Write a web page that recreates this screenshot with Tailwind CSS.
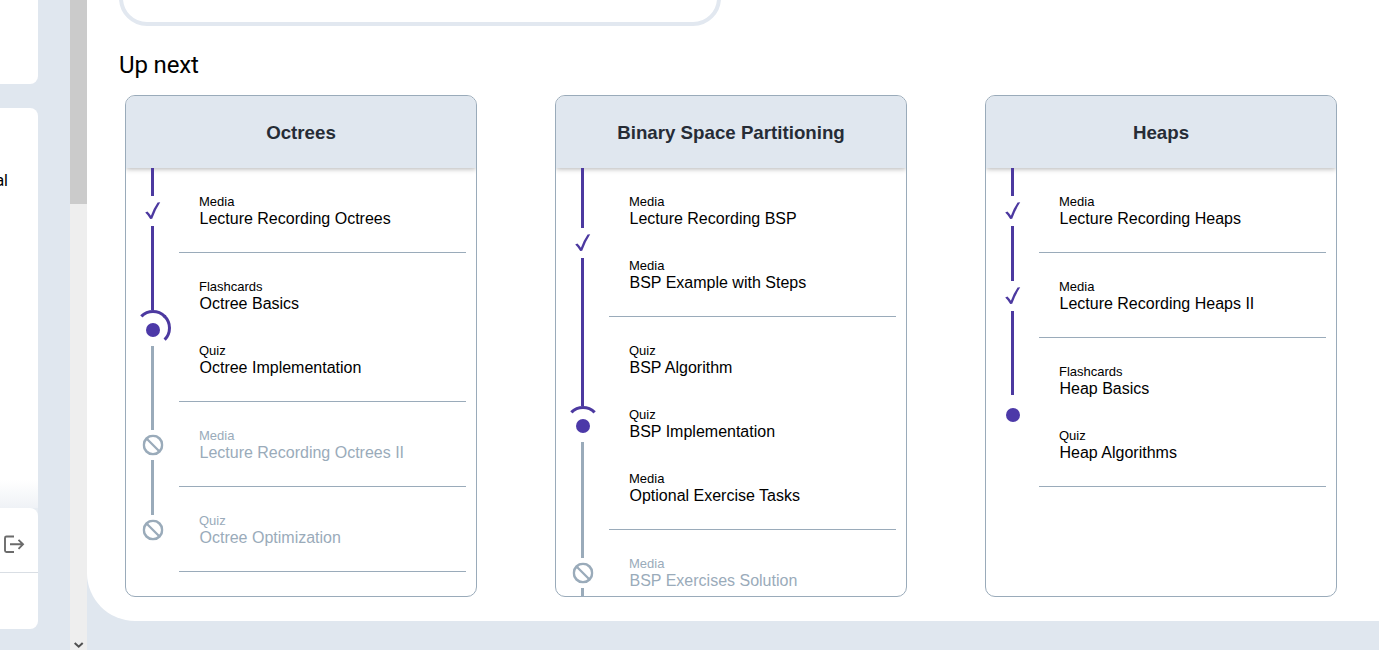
<!DOCTYPE html>
<html lang="en">
<head>
<meta charset="utf-8">
<title>Up next</title>
<script src="https://cdn.jsdelivr.net/npm/@tailwindcss/browser@4"></script>
</head>
<body class="flex h-[650px] w-[1379px] overflow-hidden bg-[#e0e7ef] text-black font-['Liberation_Sans',Arial,sans-serif]">
<svg class="hidden">
  <symbol id="check" viewBox="0 0 16 18"><path d="M.2 10.600 2.400 9.600Q4.400 11.400 5.900 13.700 8.600 6.400 12.600 .6L15.200 .3Q10.300 8 7.200 16.800L5.200 16.900Q3 13.200 .2 10.600Z" fill="currentColor"/></symbol>
  <symbol id="ban" viewBox="0 0 21 21"><circle cx="10.500" cy="10.500" r="9.200" fill="none" stroke="currentColor" stroke-width="2.500"/><path d="M4 4 17 17" stroke="currentColor" stroke-width="2.300"/></symbol>
</svg>

<aside class="flex w-[70px] shrink-0 flex-col">
  <div class="h-[84px] w-[38px] rounded-br-lg bg-white"></div>
  <div class="mt-6 flex h-[521px] w-[38px] flex-col overflow-hidden rounded-r-lg bg-white">
    <div class="flex h-[400px] flex-col justify-between">
      <div class="mt-[61px] flex w-2 justify-end text-[16px] leading-[24px] font-['Roboto',sans-serif]">al</div>
      <div class="h-7 bg-linear-to-b from-white to-[#eff2f6]"></div>
    </div>
    <div class="bg-[#e8edf3]">
      <div class="flex h-[65px] items-center rounded-tr-lg border-b border-[#d9dee4] bg-white pt-[9px] pl-[3px]">
        <svg class="h-[20px] w-[22px] text-[#6b6b6b]" viewBox="0 0 22 20" fill="none" stroke="currentColor" stroke-width="1.900"><path d="M11 1.500H3.500Q2 1.500 2 3V15.500Q2 17 3.500 17H11M7 9.300H20M15.500 4.800 20 9.300 15.500 13.800"/></svg>
      </div>
    </div>
  </div>
</aside>

<div class="flex w-[17px] shrink-0 flex-col justify-between bg-[#eeeeee]">
  <div class="h-[204px] bg-[#cbcbcb]"></div>
  <svg class="ml-1 h-[9px] w-[10px]" viewBox="0 0 10 9" fill="none" stroke="#505050" stroke-width="2"><path d="M.700 1.900 4.700 5.700 8.700 1.900"/></svg>
</div>

<main class="h-[621px] flex-1 overflow-hidden rounded-bl-[48px] bg-white pl-8">
  <div class="-mt-[75px] h-[101px] w-[602px] rounded-[28px] border-4 border-[#e2e8f0]"></div>
  <h2 class="mt-[23px] text-[24px] leading-8 tracking-[-0.15px] font-['Roboto',sans-serif]">Up next</h2>
  <div class="mt-3.5 ml-1.5 flex gap-[78px]" id="cards"></div>
</main>

<script>
const data = [
  ["Octrees", false, [
    ["check", [["Media", "Lecture Recording Octrees"]]],
    ["half", [["Flashcards", "Octree Basics"], ["Quiz", "Octree Implementation"]]],
    ["ban", [["Media", "Lecture Recording Octrees II"]]],
    ["ban", [["Quiz", "Octree Optimization"]]]]],
  ["Binary Space Partitioning", true, [
    ["check", [["Media", "Lecture Recording BSP"], ["Media", "BSP Example with Steps"]]],
    ["third", [["Quiz", "BSP Algorithm"], ["Quiz", "BSP Implementation"], ["Media", "Optional Exercise Tasks"]]],
    ["ban", [["Media", "BSP Exercises Solution"]]]]],
  ["Heaps", false, [
    ["check", [["Media", "Lecture Recording Heaps"]]],
    ["check", [["Media", "Lecture Recording Heaps II"]]],
    ["dot", [["Flashcards", "Heap Basics"], ["Quiz", "Heap Algorithms"]]]]]
];
const dot = '<span class="mt-[5px] block size-3.5 rounded-full bg-[#4c39a8]"></span>';
const ring = "flex size-9 shrink-0 items-center justify-center rounded-full border-[3px] border-transparent ";
const nodes = {
  check: '<div class="flex h-[30px] shrink-0 items-center text-[#4c39a0]"><svg class="h-[18px] w-4"><use href="#check"/></svg></div>',
  ban: '<div class="flex h-[30px] shrink-0 items-center text-[#9aabba]"><svg class="size-[22px]" viewBox="-0.5 -0.5 22 22"><use href="#ban" width="21" height="21"/></svg></div>',
  half: `<div class="${ring} border-t-[#4c39a0] border-r-[#4c39a0]">${dot}</div>`,
  third: `<div class="${ring} border-t-[#4c39a0]">${dot}</div>`,
  dot: `<div class="${ring}">${dot}</div>`
};
const rail = c => `<span class="w-[3px] flex-1 ${c}"></span>`;
document.getElementById("cards").innerHTML = data.map(([title, continues, sections]) => `
<article class="flex h-[502px] w-[352px] shrink-0 flex-col overflow-hidden rounded-[10px] border border-[#9aabba]">
  <h3 class="flex h-[72px] shrink-0 items-center justify-center bg-[#e0e7ef] pt-0.5 text-[18.72px] font-bold text-[#262c36] shadow-[0_1px_5px_rgba(0,0,0,0.3)]">${title}</h3>
  <div class="relative flex-1 overflow-hidden">${sections.map(([kind, items], i) => {
    const locked = kind === "ban", last = i === sections.length - 1;
    const top = locked ? "bg-[#9aabba]" : "bg-[#4c39a0]";
    const bottom = last && !continues ? "bg-transparent" : kind === "check" ? "bg-[#4c39a0]" : "bg-[#9aabba]";
    return `<section class="flex pr-2.5">
      <div class="flex w-[53px] flex-col items-center">${rail(top)}${nodes[kind]}${rail(bottom)}</div>
      <div class="flex-1 border-b border-[#9aabba] pt-[11px] pb-[9px] pl-5 ${locked ? "text-[#9aabba]" : ""}">${items.map(([k, t]) =>
        `<div class="flex h-16 flex-col justify-center"><p class="text-[13px] leading-4">${k}</p><p class="pl-[0.5px] text-[16px] leading-[18px]">${t}</p></div>`).join("")}</div>
    </section>`; }).join("")}</div>
</article>`).join("");
</script>
</body>
</html>
